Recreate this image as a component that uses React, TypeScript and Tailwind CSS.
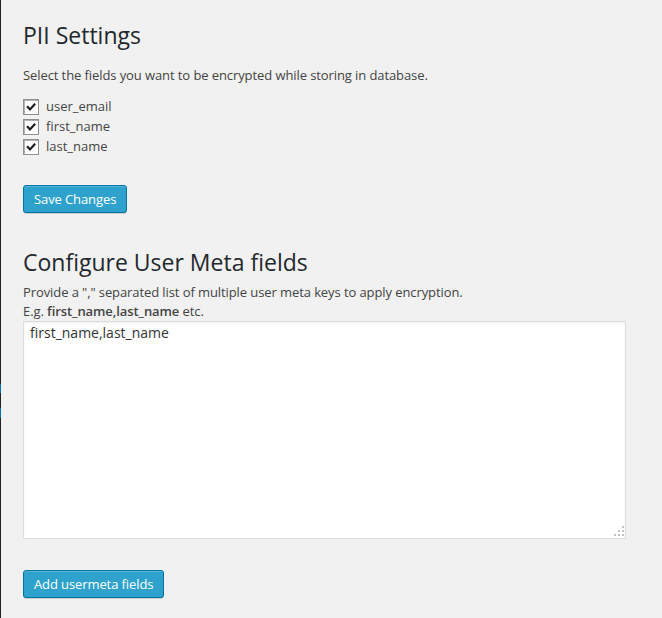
import React from "react";

function Check({ label }: { label: string }) {
  return (
    <div className="flex items-center h-[16px]">
      <span className="relative w-[16px] h-[16px] border border-[#8f8f8f] bg-white shadow-[inset_1px_1px_0_rgba(0,0,0,0.3)] flex items-center justify-center">
        <svg width="10" height="10" viewBox="0 0 10 10">
          <path d="M1.8 5 L4 7.4 L8.4 2.6" fill="none" stroke="#1e1e1e" strokeWidth="2.2" strokeLinecap="square" />
        </svg>
      </span>
      <span className="ml-[7px] leading-[16px] text-[#444] -mt-[2px]">{label}</span>
    </div>
  );
}

function Button({ children }: { children: React.ReactNode }) {
  return (
    <button className="h-[28px] px-[10px] rounded-[3px] border border-[#0074a2] bg-[#2ea2cc] text-white text-[13px] leading-[26px] tracking-[-0.1px] shadow-[inset_0_1px_0_rgba(120,200,230,0.5),0_1px_0_rgba(0,0,0,0.15)] font-['Open_Sans',sans-serif]">
      {children}
    </button>
  );
}

export default function App() {
  return (
    <div className="flex w-[662px] h-[618px] bg-[#f1f1f1] font-['Open_Sans',sans-serif] text-[13px] text-[#444] overflow-hidden">
      <div className="w-px shrink-0 flex flex-col bg-[#222]">
        <div className="h-[384px]" />
        <div className="h-[9px] bg-[#0074a2]" />
        <div className="h-[15px]" />
        <div className="h-[10px] bg-[#0074a2]" />
      </div>
      <div className="flex-1 pl-[22px] pt-[21px]">
        <h2 className="text-[23px] leading-[29px] text-[#23282d] font-normal">PII Settings</h2>
        <p className="mt-[16px] leading-[18px] tracking-[-0.09px]">Select the fields you want to be encrypted while storing in database.</p>
        <div className="mt-[15px] flex flex-col gap-[4px]">
          <Check label="user_email" />
          <Check label="first_name" />
          <Check label="last_name" />
        </div>
        <div className="mt-[30px]">
          <Button>Save Changes</Button>
        </div>
        <h2 className="mt-[35px] text-[23px] leading-[29px] text-[#23282d] font-normal">Configure User Meta fields</h2>
        <p className="mt-[6px] leading-[19px] tracking-[-0.09px]">
          Provide a "," separated list of multiple user meta keys to apply encryption.
          <br />
          E.g. <b className="font-semibold">first_name,last_name</b> etc.
        </p>
        <div className="relative mt-0 w-[603px] h-[218px]">
          <textarea
            className="w-full h-full resize-none border border-[#ddd] bg-white px-[6px] py-[2px] text-[14px] leading-[18px] text-[#333] shadow-[inset_0_1px_2px_rgba(0,0,0,0.07)] outline-none font-['Open_Sans',sans-serif]"
            defaultValue="first_name,last_name"
          />
          <svg className="absolute right-[2px] bottom-[3px]" width="10" height="10" viewBox="0 0 10 10">
            <rect x="8" y="0" width="2" height="2" fill="#c3c3c3" />
            <rect x="4" y="4" width="2" height="2" fill="#c3c3c3" />
            <rect x="8" y="4" width="2" height="2" fill="#c3c3c3" />
            <rect x="0" y="8" width="2" height="2" fill="#c3c3c3" />
            <rect x="4" y="8" width="2" height="2" fill="#c3c3c3" />
            <rect x="8" y="8" width="2" height="2" fill="#c3c3c3" />
          </svg>
        </div>
        <div className="mt-[31px]">
          <Button>Add usermeta fields</Button>
        </div>
      </div>
    </div>
  );
}
